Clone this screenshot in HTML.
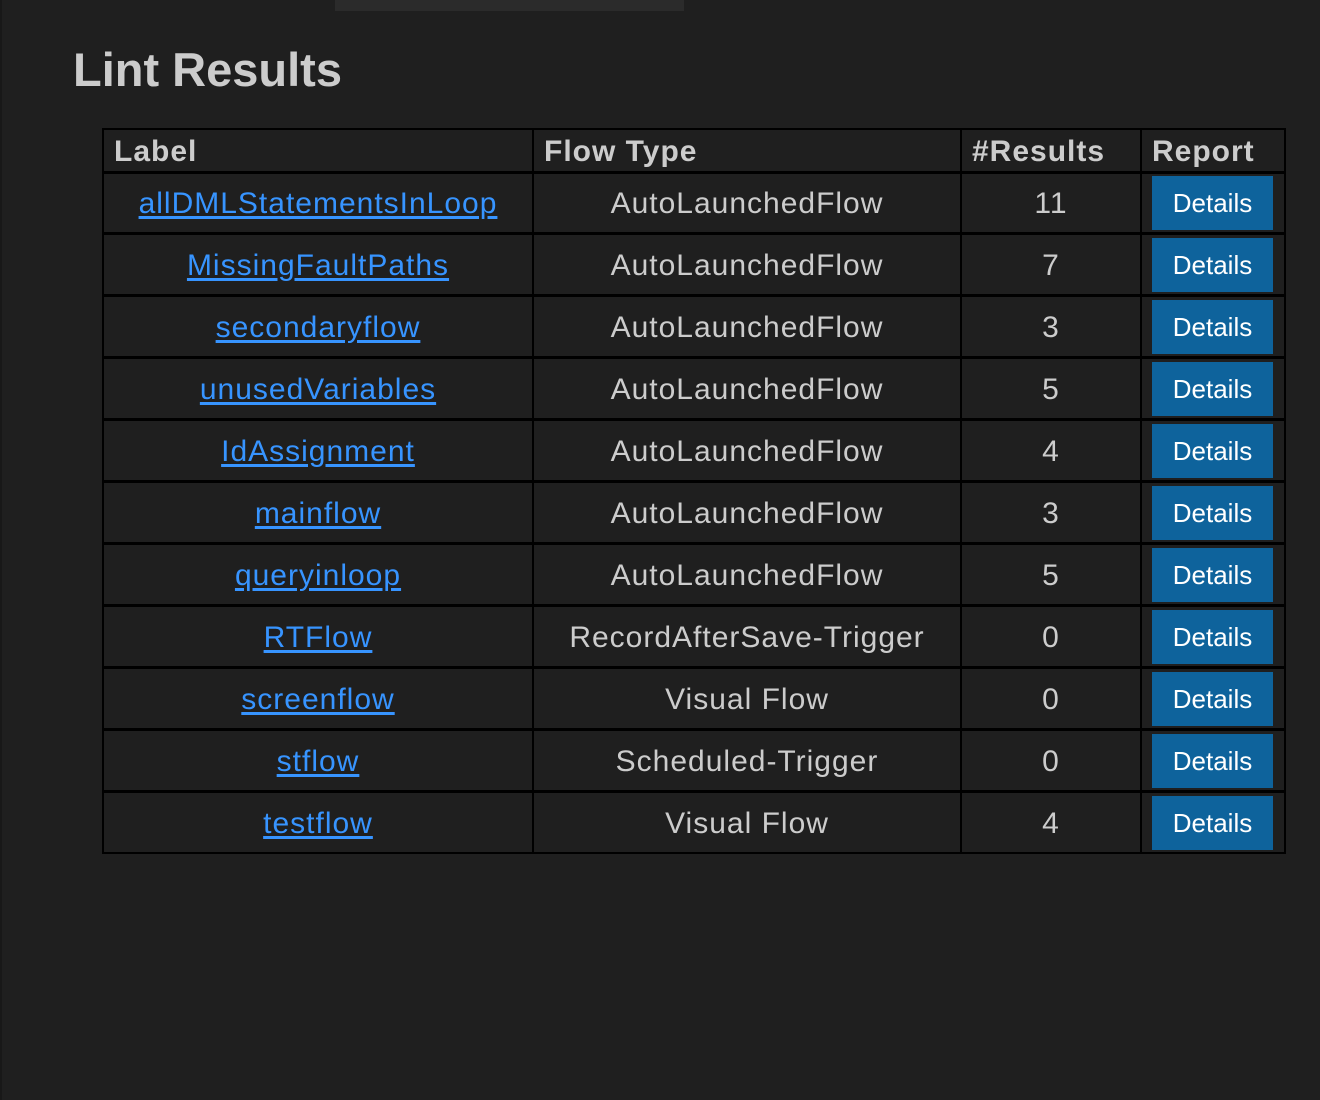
<!DOCTYPE html>
<html><head><style>
body{margin:0;width:1320px;height:1100px;background:#1f1f1f;position:relative;overflow:hidden;font-family:"Liberation Sans",sans-serif;color:#cccccc}
.a{position:absolute}
.h{position:absolute;left:102px;width:1184px;background:#000}
.v{position:absolute;top:128px;height:726px;background:#000}
.c{position:absolute;height:60px;line-height:62px;text-align:center;font-size:30px;letter-spacing:1px;white-space:nowrap}
.l{color:#3794ff;text-decoration:underline;text-underline-offset:3px}
.b{position:absolute;left:1152px;width:121px;height:54px;background:#0e639c;color:#fff;font-size:26px;line-height:55px;text-align:center}
.th{position:absolute;top:130px;height:42px;line-height:44px;font-size:30px;letter-spacing:1px;font-weight:bold;color:#cccccc}
</style></head><body>
<div class="a" style="left:335px;top:0;width:349px;height:11px;background:#2b2b2b"></div>
<div class="a" style="left:0;top:0;width:2px;height:1100px;background:#181818"></div>
<div class="a" style="left:73px;top:42px;font-size:47px;font-weight:bold;color:#cccccc">Lint Results</div>

<div class="h" style="top:128px;height:2px"></div>
<div class="h" style="top:171px;height:3px"></div>
<div class="h" style="top:232px;height:3px"></div>
<div class="h" style="top:294px;height:3px"></div>
<div class="h" style="top:356px;height:3px"></div>
<div class="h" style="top:418px;height:3px"></div>
<div class="h" style="top:480px;height:3px"></div>
<div class="h" style="top:542px;height:3px"></div>
<div class="h" style="top:604px;height:3px"></div>
<div class="h" style="top:666px;height:3px"></div>
<div class="h" style="top:728px;height:3px"></div>
<div class="h" style="top:790px;height:3px"></div>
<div class="h" style="top:852px;height:2px"></div>
<div class="v" style="left:102px;width:2px"></div>
<div class="v" style="left:532px;width:2px"></div>
<div class="v" style="left:960px;width:2px"></div>
<div class="v" style="left:1140px;width:2px"></div>
<div class="v" style="left:1284px;width:2px"></div>

<div class="th" style="left:114px">Label</div>
<div class="th" style="left:544px">Flow Type</div>
<div class="th" style="left:972px">#Results</div>
<div class="th" style="left:1152px">Report</div>

<div style="position:absolute;left:0;top:173px">
<div class="c" style="left:104px;width:428px;top:0"><span class="l">allDMLStatementsInLoop</span></div>
<div class="c" style="left:534px;width:426px;top:0">AutoLaunchedFlow</div>
<div class="c" style="left:962px;width:178px;top:0">11</div>
<div class="b" style="top:3px">Details</div>
</div>
<div style="position:absolute;left:0;top:235px">
<div class="c" style="left:104px;width:428px;top:0"><span class="l">MissingFaultPaths</span></div>
<div class="c" style="left:534px;width:426px;top:0">AutoLaunchedFlow</div>
<div class="c" style="left:962px;width:178px;top:0">7</div>
<div class="b" style="top:3px">Details</div>
</div>
<div style="position:absolute;left:0;top:297px">
<div class="c" style="left:104px;width:428px;top:0"><span class="l">secondaryflow</span></div>
<div class="c" style="left:534px;width:426px;top:0">AutoLaunchedFlow</div>
<div class="c" style="left:962px;width:178px;top:0">3</div>
<div class="b" style="top:3px">Details</div>
</div>
<div style="position:absolute;left:0;top:359px">
<div class="c" style="left:104px;width:428px;top:0"><span class="l">unusedVariables</span></div>
<div class="c" style="left:534px;width:426px;top:0">AutoLaunchedFlow</div>
<div class="c" style="left:962px;width:178px;top:0">5</div>
<div class="b" style="top:3px">Details</div>
</div>
<div style="position:absolute;left:0;top:421px">
<div class="c" style="left:104px;width:428px;top:0"><span class="l">IdAssignment</span></div>
<div class="c" style="left:534px;width:426px;top:0">AutoLaunchedFlow</div>
<div class="c" style="left:962px;width:178px;top:0">4</div>
<div class="b" style="top:3px">Details</div>
</div>
<div style="position:absolute;left:0;top:483px">
<div class="c" style="left:104px;width:428px;top:0"><span class="l">mainflow</span></div>
<div class="c" style="left:534px;width:426px;top:0">AutoLaunchedFlow</div>
<div class="c" style="left:962px;width:178px;top:0">3</div>
<div class="b" style="top:3px">Details</div>
</div>
<div style="position:absolute;left:0;top:545px">
<div class="c" style="left:104px;width:428px;top:0"><span class="l">queryinloop</span></div>
<div class="c" style="left:534px;width:426px;top:0">AutoLaunchedFlow</div>
<div class="c" style="left:962px;width:178px;top:0">5</div>
<div class="b" style="top:3px">Details</div>
</div>
<div style="position:absolute;left:0;top:607px">
<div class="c" style="left:104px;width:428px;top:0"><span class="l">RTFlow</span></div>
<div class="c" style="left:534px;width:426px;top:0">RecordAfterSave-Trigger</div>
<div class="c" style="left:962px;width:178px;top:0">0</div>
<div class="b" style="top:3px">Details</div>
</div>
<div style="position:absolute;left:0;top:669px">
<div class="c" style="left:104px;width:428px;top:0"><span class="l">screenflow</span></div>
<div class="c" style="left:534px;width:426px;top:0">Visual Flow</div>
<div class="c" style="left:962px;width:178px;top:0">0</div>
<div class="b" style="top:3px">Details</div>
</div>
<div style="position:absolute;left:0;top:731px">
<div class="c" style="left:104px;width:428px;top:0"><span class="l">stflow</span></div>
<div class="c" style="left:534px;width:426px;top:0">Scheduled-Trigger</div>
<div class="c" style="left:962px;width:178px;top:0">0</div>
<div class="b" style="top:3px">Details</div>
</div>
<div style="position:absolute;left:0;top:793px">
<div class="c" style="left:104px;width:428px;top:0"><span class="l">testflow</span></div>
<div class="c" style="left:534px;width:426px;top:0">Visual Flow</div>
<div class="c" style="left:962px;width:178px;top:0">4</div>
<div class="b" style="top:3px">Details</div>
</div>
</body></html>
